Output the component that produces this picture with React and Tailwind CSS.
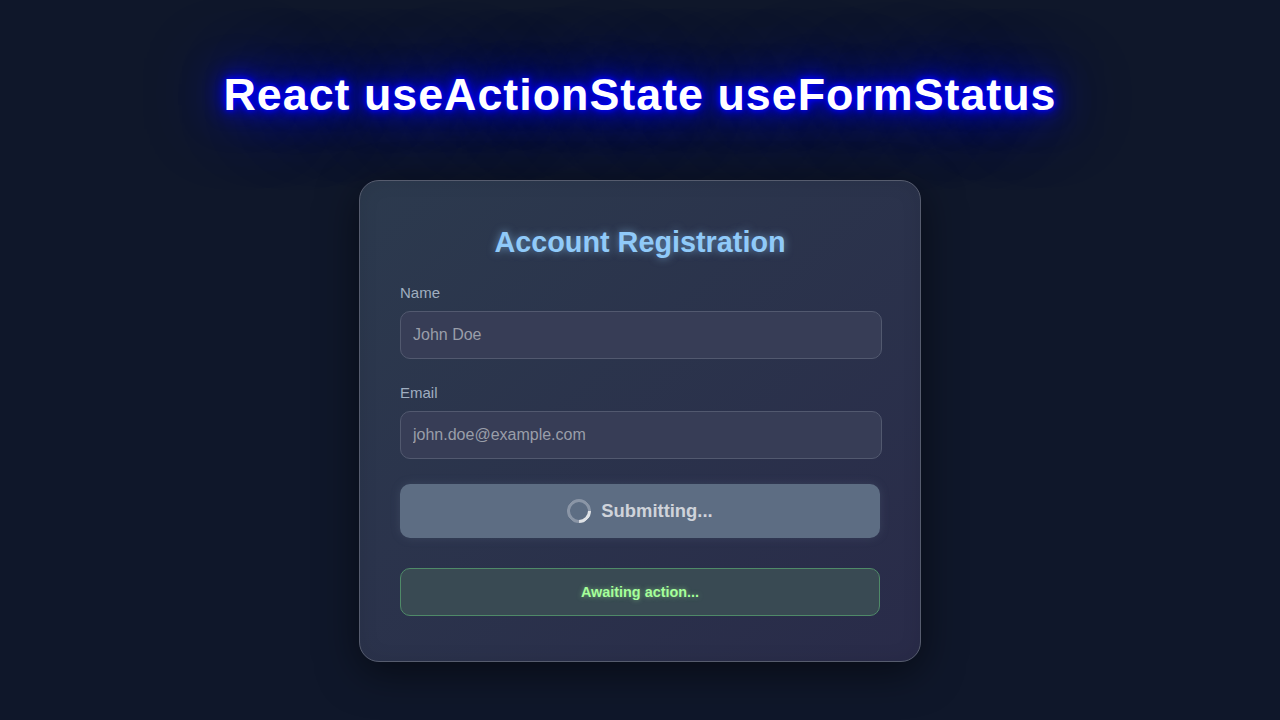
import React from 'react';

function Field({ label, value }) {
  return (
    <div className="flex flex-col">
      <label className="text-[15px] leading-[17px] mb-[10px] text-[#a0aec0]">{label}</label>
      <input
        readOnly
        value={value}
        className="w-[482px] h-[48px] px-3 rounded-[10px] border border-[#52596f] bg-[#373d56] text-[16px] text-[#9a9ea9] outline-none font-['Liberation_Sans',sans-serif]"
      />
    </div>
  );
}

export default function App() {
  return (
    <div className="min-h-screen h-[720px] overflow-hidden bg-[#0f172a] flex flex-col items-center font-['Liberation_Sans',sans-serif]">
      <h1 className="mt-[66px] h-[56px] leading-[56px] text-[44.8px] font-bold tracking-[1px] text-white whitespace-nowrap [text-shadow:0_0_5px_#00f,0_0_10px_#00f,0_0_20px_#00f,0_0_40px_#00f,0_0_80px_#00f]">
        React useActionState useFormStatus
      </h1>

      <div className="mt-[58px] w-[562px] h-[482px] rounded-[20px] border border-[#565c6e] bg-gradient-to-br from-[#2c3a4e] to-[#292b49] shadow-[0_10px_40px_rgba(0,0,0,0.5),inset_0_0_20px_rgba(0,0,0,0.08)] px-10 pt-[43px]">
        <h2 className="text-[28.8px] leading-[36px] font-bold text-center text-[#90caf9] [text-shadow:0_0_8px_rgba(144,202,249,0.6)] mb-[24px]">
          Account Registration
        </h2>

        <div className="flex flex-col gap-[25px]">
          <Field label="Name" value="John Doe" />
          <Field label="Email" value="john.doe@example.com" />
        </div>

        <button
          type="button"
          className="mt-[25px] w-[480px] h-[54px] rounded-[10px] bg-[#5d6d83] text-[#cfd3da] text-[18.4px] font-bold flex items-center justify-center gap-[10px] shadow-[0_0_10px_rgba(93,109,131,0.3)]"
        >
          <span className="w-6 h-6 rounded-full border-[3px] border-[#8a95a6] border-b-[#dfe2e6] rotate-[-45deg]"></span>
          Submitting...
        </button>

        <div className="mt-[30px] w-[480px] h-[48px] pt-[2px] rounded-[10px] border border-[#4f8a68] bg-[#394a53] flex items-center justify-center text-[14.4px] font-bold text-[#a5ff9a] [text-shadow:0_0_5px_rgba(165,255,154,0.5)]">
          Awaiting action...
        </div>
      </div>
    </div>
  );
}
